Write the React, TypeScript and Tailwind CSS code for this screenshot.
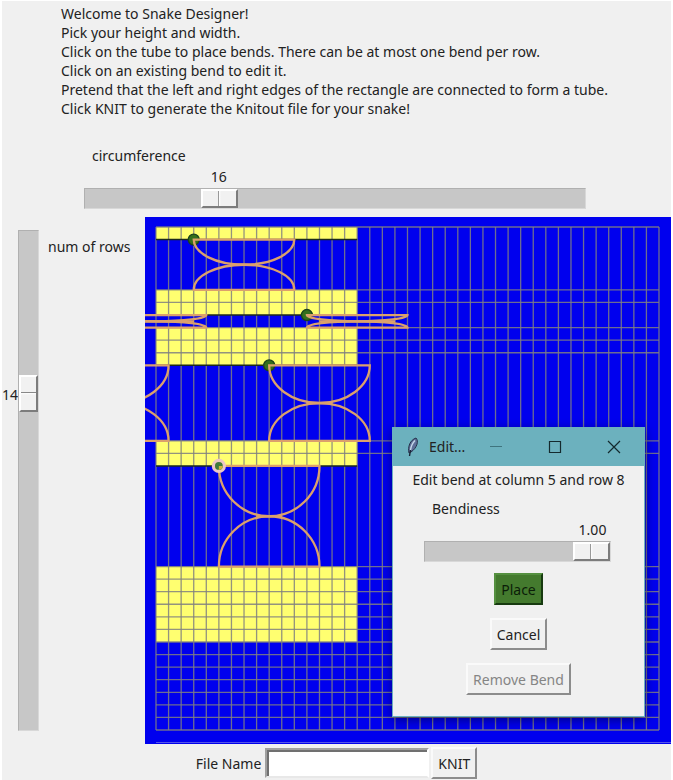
import { useState } from "react";

const CELL = 12.575;
const ORIGIN_X = 11;
const ORIGIN_Y = 10;
const CELLS = 40;

const x = (col: number) => ORIGIN_X + col * CELL;
const y = (row: number) => ORIGIN_Y + row * CELL;

type Bend = { col: number; row: number; height: number; selected?: boolean };

const bends: Bend[] = [
  { col: 3, row: 1, height: 4 },
  { col: 12, row: 7, height: 1 },
  { col: 9, row: 11, height: 6 },
  { col: 5, row: 19, height: 8, selected: true },
];

const bands = [
  { row: 0, height: 1 },
  { row: 5, height: 2 },
  { row: 8, height: 3 },
  { row: 17, height: 2 },
  { row: 27, height: 6 },
];

const insideBend = (row: number) =>
  bends.some((b) => row >= b.row && row < b.row + b.height);

function BendCurve({ col, row, height }: Bend) {
  const rx = 4 * CELL;
  const ry = (height / 2) * CELL;
  const left = x(col);
  const right = x(col + 8);
  const mid = x(col + 4);
  const top = y(row);
  const bottom = y(row + height);
  const flat = height === 1 ? 38 : 13;
  return (
    <g fill="none" stroke="#dba06c" strokeWidth="2.3">
      <path d={`M${left} ${top}H${right}A${rx} ${ry} 0 0 1 ${left} ${top}Z`} />
      <path d={`M${left} ${bottom}H${right}A${rx} ${ry} 0 0 0 ${left} ${bottom}Z`} />
      <path d={`M${mid - flat} ${top + ry}H${mid + flat}`} />
    </g>
  );
}

function TubeCanvas() {
  const lines = Array.from({ length: CELLS + 1 }, (_, i) => i);
  return (
    <svg viewBox="0 0 526 527" className="block h-auto w-full bg-[#0000ee]" role="img" aria-label="Tube">
      {bands.map((b) => (
        <rect key={b.row} x={x(0)} y={y(b.row)} width={16 * CELL} height={b.height * CELL} fill="#ffff70" />
      ))}
      <g stroke="#808080" strokeWidth="1.3" strokeOpacity="0.85">
        {lines.map((i) => (
          <path key={i} d={`M${x(i)} ${y(0)}V${y(CELLS)}`} />
        ))}
        {lines.filter((i) => !insideBend(i)).map((i) => (
          <path key={i} d={`M${x(0)} ${y(i)}H${x(CELLS)}`} />
        ))}
      </g>
      {bends.map((b) => (
        <path key={b.row} d={`M${x(0)} ${y(b.row)}H${x(16)}`} stroke="#1c2a1c" strokeWidth="1.5" />
      ))}
      {bends.map((b) => (
        <circle
          key={b.row}
          cx={x(b.col)}
          cy={y(b.row)}
          r="5.5"
          fill="#356f1c"
          stroke="#1b421d"
          strokeWidth="1.4"
        />
      ))}
      {bends.map((b) => (
        <g key={b.row}>
          <BendCurve {...b} />
          <BendCurve {...b} col={b.col - 16} />
        </g>
      ))}
      {bends.filter((b) => b.selected).map((b) => (
        <g key={b.row}>
          <circle cx={x(b.col)} cy={y(b.row)} r="5.5" fill="#3f7a3c" stroke="#edc6c6" strokeWidth="3.2" />
          <path d={`M${x(b.col)} ${y(b.row)}h3.800a3.800 3.800 0 0 1-3.800 3.800z`} fill="#d2b43c" />
        </g>
      ))}
      <path d="M11 525.500H526" stroke="#5555e8" strokeWidth="1" />
    </svg>
  );
}

const track = "m-0 block cursor-pointer appearance-none border border-[#b0b0b0] border-r-[#d8d8d8] border-b-[#d8d8d8] bg-[#c7c7c7]";
const thumb =
  "[&::-webkit-slider-thumb]:appearance-none [&::-webkit-slider-thumb]:border-2 [&::-webkit-slider-thumb]:border-t-white [&::-webkit-slider-thumb]:border-l-white [&::-webkit-slider-thumb]:border-r-[#7c7c7c] [&::-webkit-slider-thumb]:border-b-[#7c7c7c]";
const thumbAcross =
  "[&::-webkit-slider-thumb]:h-[19px] [&::-webkit-slider-thumb]:w-[37px] [&::-webkit-slider-thumb]:bg-[linear-gradient(to_right,#f1f1f1_15px,#999_15px,#999_16px,#fff_16px,#f1f1f1_18px)]";
const thumbDown =
  "[&::-webkit-slider-thumb]:h-[37px] [&::-webkit-slider-thumb]:w-[19px] [&::-webkit-slider-thumb]:bg-[linear-gradient(to_bottom,#f1f1f1_15px,#888_15px,#888_16px,#fff_16px,#f1f1f1_18px)]";

const button =
  "h-[32px] border-2 border-t-[#fafafa] border-l-[#fafafa] border-r-[#8c8c8c] border-b-[#8c8c8c] bg-[#f0f0f0] px-[5px]";

function ScaleAcross(props: {
  id: string;
  label: string;
  value: number;
  max: number;
  step: number;
  digits: number;
  onChange: (v: number) => void;
}) {
  const share = props.value / props.max;
  return (
    <div>
      <label htmlFor={props.id} className="block pl-2">
        {props.label}
      </label>
      <div className="flex pt-0.5 pb-0.5">
        <span style={{ flexGrow: share }} />
        <output htmlFor={props.id} className="w-[37px] text-center">
          {props.value.toFixed(props.digits)}
        </output>
        <span style={{ flexGrow: 1 - share }} />
      </div>
      <input
        id={props.id}
        type="range"
        min={0}
        max={props.max}
        step={props.step}
        value={props.value}
        onChange={(e) => props.onChange(Number(e.target.value))}
        className={`h-[21px] w-full ${track} ${thumb} ${thumbAcross}`}
      />
    </div>
  );
}

function EditDialog() {
  const [bendiness, setBendiness] = useState(1);
  return (
    <section
      aria-label="Edit bend"
      className="absolute top-[210px] right-[26px] w-[253px] border border-t-0 border-[#6ab0c0] bg-[#f0f0f0] pb-[21px] shadow-[0_3px_10px_rgba(0,0,0,0.45)]"
    >
      <header className="flex h-[39px] items-center bg-[#6cb1be] pl-[12px]">
        <svg width="16" height="22" viewBox="0 0 16 22" aria-hidden="true">
          <path d="M4 17C2.500 11 5 4 11 2c3 3 1 10-5 14z" fill="#5f6f98" stroke="#26324c" strokeWidth="1" />
          <path d="M10 4.500C7.500 7 6 10 5.500 14" fill="none" stroke="#c6d8ea" strokeWidth="1.400" />
          <path d="M5.500 14l-1 6" stroke="#1b2536" strokeWidth="1.400" />
        </svg>
        <h2 className="pl-2">Edit...</h2>
        <div className="flex flex-1 items-center justify-between pr-[23px] pl-[24px]">
          <button type="button" aria-label="Minimize">
            <svg width="14" height="14" viewBox="0 0 14 14" className="block" stroke="#3f747e">
              <path d="M1 6.500h12" />
            </svg>
          </button>
          <button type="button" aria-label="Maximize">
            <svg width="14" height="14" viewBox="0 0 14 14" className="block" fill="none" stroke="#142a2e" strokeWidth="1.200">
              <path d="M1.500 1.500h11v11h-11z" />
            </svg>
          </button>
          <button type="button" aria-label="Close">
            <svg width="14" height="14" viewBox="0 0 14 14" className="block" stroke="#142a2e" strokeWidth="1.200">
              <path d="M1 1l12 12M13 1L1 13" />
            </svg>
          </button>
        </div>
      </header>
      <p className="pt-[4px] text-center">Edit bend at column 5 and row 8</p>
      <div className="pt-[10px] pr-[33px] pl-[31px]">
        <ScaleAcross
          id="bendiness"
          label="Bendiness"
          value={bendiness}
          max={1}
          step={0.01}
          digits={2}
          onChange={setBendiness}
        />
      </div>
      <div className="flex flex-col items-center gap-[13px] pt-[11px]">
        <button
          type="button"
          className="h-[32px] border-2 border-t-[#559040] border-l-[#559040] border-r-[#173a10] border-b-[#173a10] bg-[#447a2e] px-[5px] text-[#0b1d08]"
        >
          Place
        </button>
        <button type="button" className={button}>
          Cancel
        </button>
        <button type="button" disabled className={`${button} text-[#858585]`}>
          Remove Bend
        </button>
      </div>
    </section>
  );
}

export default function App() {
  const [circumference, setCircumference] = useState(16);
  const [rows, setRows] = useState(14);
  const share = rows / 45;
  return (
    <main className="border-2 border-t border-b border-white bg-[#f0f0f0] font-['Noto_Sans',sans-serif] text-[14px] leading-[19px] text-[#222]">
      <div className="pt-[3px] pl-[59px]">
        <h1>Welcome to Snake Designer!</h1>
        <p>Pick your height and width.</p>
        <p>Click on the tube to place bends. There can be at most one bend per row.</p>
        <p>Click on an existing bend to edit it.</p>
        <p>Pretend that the left and right edges of the rectangle are connected to form a tube.</p>
        <p>Click KNIT to generate the Knitout file for your snake!</p>
      </div>
      <div className="pt-[28px] pr-[85px] pl-[82px]">
        <ScaleAcross
          id="circumference"
          label="circumference"
          value={circumference}
          max={64}
          step={1}
          digits={0}
          onChange={setCircumference}
        />
      </div>
      <div className="flex pt-[8px]">
        <div className="flex w-[143px] shrink-0 py-[13px]">
          <div className="flex w-[16px] flex-col">
            <span style={{ flexGrow: share }} />
            <output htmlFor="rows" className="flex h-[37px] items-center pt-1">
              {rows}
            </output>
            <span style={{ flexGrow: 1 - share }} />
          </div>
          <input
            id="rows"
            type="range"
            min={0}
            max={45}
            value={rows}
            onChange={(e) => setRows(Number(e.target.value))}
            className={`h-auto w-[21px] [writing-mode:vertical-lr] ${track} ${thumb} ${thumbDown}`}
          />
          <label htmlFor="rows" className="pt-[7px] pl-[9px] whitespace-nowrap">
            num of rows
          </label>
        </div>
        <div className="relative min-w-0 flex-1">
          <TubeCanvas />
          <EditDialog />
        </div>
      </div>
      <form className="flex items-center justify-center pt-[3px] pb-px" onSubmit={(e) => e.preventDefault()}>
        <label htmlFor="file-name" className="pr-[4px]">
          File Name
        </label>
        <input
          id="file-name"
          type="text"
          className="h-[30px] w-[164px] border-2 border-t-[#a0a0a0] border-l-[#a0a0a0] border-r-white border-b-[#e8e8e8] bg-white px-1 shadow-[inset_2px_2px_0_#707070]"
        />
        <button type="submit" className={`ml-[2px] ${button}`}>
          KNIT
        </button>
      </form>
    </main>
  );
}
